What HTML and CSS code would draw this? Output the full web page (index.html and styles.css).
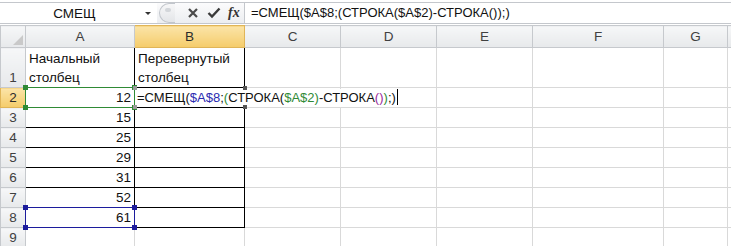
FILE: index.html
```html
<!DOCTYPE html>
<html lang="ru">
<head>
  <meta charset="UTF-8">
  <title>СМЕЩ</title>
  <link rel="stylesheet" href="styles.css">
</head>
<body>
  <div class="fbar">
    <div class="namebox">
      <span class="name">СМЕЩ</span>
      <span class="drop"></span>
    </div>
    <div class="fbtns">
      <span class="grip"><span class="dot"></span></span>
      <svg class="ico x" width="12" height="12" viewBox="0 0 12 12">
        <path d="M2 2 L10 10 M10 2 L2 10" stroke="#4a4a4a" stroke-width="2.2" fill="none"/>
      </svg>
      <svg class="ico ok" width="14" height="12" viewBox="0 0 14 12">
        <path d="M1.5 6 L5 9.5 L12.5 1.5" stroke="#3a3a3a" stroke-width="2.4" fill="none"/>
      </svg>
      <span class="fx">fx</span>
    </div>
    <div class="ftext">=СМЕЩ($A$8;(СТРОКА($A$2)-СТРОКА());)</div>
  </div>

  <table class="sheet">
    <colgroup>
      <col style="width:25px">
      <col style="width:109px">
      <col style="width:110px">
      <col style="width:96px">
      <col style="width:96px">
      <col style="width:96px">
      <col style="width:131px">
      <col style="width:64px">
      <col style="width:4px">
    </colgroup>
    <thead>
      <tr class="hdr">
        <th class="corner"><svg width="10" height="10" viewBox="0 0 10 10"><path d="M10 0 L10 10 L0 10 Z" fill="#c9c9c9"/></svg></th>
        <th>A</th>
        <th class="sel">B</th>
        <th>C</th>
        <th>D</th>
        <th>E</th>
        <th>F</th>
        <th>G</th>
        <th></th>
      </tr>
    </thead>
    <tbody>
      <tr class="r1">
        <th>1</th>
        <td class="bx wrap">Начальный столбец</td>
        <td class="bx wrap">Перевернутый столбец</td>
        <td></td><td></td><td></td><td></td><td></td><td></td>
      </tr>
      <tr>
        <th class="sel">2</th>
        <td class="bx num">12<span class="ref green"><i class="h tl"></i><i class="h tr"></i><i class="h bl"></i><i class="h br"></i></span></td>
        <td class="bx edit"><span class="editor"><span>=СМЕЩ(</span><span class="c-blue">$A$8</span><span>;</span><span class="c-green">(</span><span>СТРОКА(</span><span class="c-green">$A$2</span><span class="c-green">)</span><span>-СТРОКА</span><span class="c-purple">()</span><span class="c-green">)</span><span>;)</span><span class="caret"></span></span><i class="h2 tl"></i><i class="h2 tr"></i><i class="h2 bl"></i><i class="h2 br"></i></td>
        <td></td><td></td><td></td><td></td><td></td><td></td>
      </tr>
      <tr><th>3</th><td class="bx num">15</td><td class="bx"></td><td></td><td></td><td></td><td></td><td></td><td></td></tr>
      <tr><th>4</th><td class="bx num">25</td><td class="bx"></td><td></td><td></td><td></td><td></td><td></td><td></td></tr>
      <tr><th>5</th><td class="bx num">29</td><td class="bx"></td><td></td><td></td><td></td><td></td><td></td><td></td></tr>
      <tr><th>6</th><td class="bx num">31</td><td class="bx"></td><td></td><td></td><td></td><td></td><td></td><td></td></tr>
      <tr><th>7</th><td class="bx num">52</td><td class="bx"></td><td></td><td></td><td></td><td></td><td></td><td></td></tr>
      <tr>
        <th>8</th>
        <td class="bx num">61<span class="ref blue"><i class="h tl"></i><i class="h tr"></i><i class="h bl"></i><i class="h br"></i></span></td>
        <td class="bx"></td>
        <td></td><td></td><td></td><td></td><td></td><td></td>
      </tr>
      <tr><th>9</th><td></td><td></td><td></td><td></td><td></td><td></td><td></td><td></td></tr>
    </tbody>
  </table>
</body>
</html>
```

FILE: styles.css
```css
body {
  margin: 0;
  width: 731px;
  height: 246px;
  overflow: hidden;
  background: #fff;
  font-family: "Liberation Sans", Arial, sans-serif;
  font-size: 13.5px;
  color: #111;
}

/* formula bar */
.fbar {
  display: flex;
  height: 20px;
  margin-top: 2px;
  border-top: 1px solid #c4c7cc;
  border-bottom: 1px solid #c4c7cc;
  background: #fff;
}
.namebox {
  width: 157px;
  display: flex;
  align-items: center;
}
.namebox .name {
  flex: 1;
  text-align: center;
  padding-left: 4px;
}
.namebox .drop {
  width: 0;
  height: 0;
  border-left: 3px solid transparent;
  border-right: 3px solid transparent;
  border-top: 3px solid #333;
  margin-right: 6px;
}
.fbtns {
  width: 87px;
  display: flex;
  align-items: center;
  background: linear-gradient(#fbfbfc, #eceef1);
}
.grip {
  width: 15px;
  height: 18px;
  margin-left: 2px;
  border: 1px solid #c2c6cc;
  border-right: none;
  border-radius: 10px 0 0 10px;
  background: linear-gradient(#f7f7f8, #e3e5e8);
  display: flex;
  align-items: center;
  justify-content: center;
}
.grip .dot {
  width: 6px;
  height: 4px;
  border-radius: 2px;
  background: #d3d6da;
  margin-bottom: 6px;
}
.ico {
  display: block;
}
.ico.x { margin-left: 12px; }
.ico.ok { margin-left: 8px; }
.fx {
  margin-left: 7px;
  font-family: "Liberation Serif", serif;
  font-style: italic;
  font-weight: bold;
  font-size: 14px;
  color: #333;
}
.ftext {
  flex: 1;
  border-left: 1px solid #c4c7cc;
  padding-left: 6px;
  line-height: 20px;
  font-size: 13px;
  white-space: nowrap;
}

/* sheet grid */
.sheet {
  width: 731px;
  border-collapse: collapse;
  table-layout: fixed;
  margin-top: 1px;
}
.sheet th,
.sheet td {
  border: 1px solid #d9d9d9;
  padding: 0 3px;
  height: 19px;
  white-space: nowrap;
  overflow: visible;
  vertical-align: bottom;
  line-height: 19px;
}
.sheet th {
  font-weight: normal;
  color: #404040;
  background: linear-gradient(#f6f7f8, #e7e9eb);
  border-color: #c6c9cd;
  text-align: center;
  padding: 0;
}
.hdr th {
  height: 21px;
  vertical-align: middle;
}
.hdr th.corner {
  text-align: right;
  vertical-align: bottom;
}
.corner svg {
  display: block;
  margin: 0 2px 2px auto;
}
.sheet th.sel {
  background: linear-gradient(#fbe4a8, #f5cc6a);
  color: #2b2b2b;
  border-color: #e0b558;
}
.r1 td,
.r1 th {
  height: 39px;
}
.sheet td.bx {
  border: 1px solid #000;
}
.wrap {
  white-space: normal !important;
  line-height: 19px;
}
.num {
  text-align: right;
  position: relative;
}

/* reference highlights */
.ref {
  position: absolute;
  left: -1px;
  top: -1px;
  right: -1px;
  bottom: -1px;
  border: 1px solid;
}
.ref.green { border-color: #2f8a35; }
.ref.blue { border-color: #1c1c9c; }
.h, .h2 {
  position: absolute;
  width: 5px;
  height: 5px;
}
.green .h { background: #2f8a35; }
.blue .h { background: #1c1c9c; }
.h.tl { left: -3px; top: -3px; }
.h.tr { right: -3px; top: -3px; }
.h.bl { left: -3px; bottom: -3px; }
.h.br { right: -3px; bottom: -3px; }

/* cell being edited */
.edit {
  position: relative;
  padding-left: 2px !important;
}
.editor {
  position: relative;
  z-index: 2;
  display: inline-block;
  background: #fff;
  padding-right: 2px;
  line-height: 18px;
  font-size: 13px;
}
.h2 {
  width: 4px;
  height: 4px;
  background: #555;
  z-index: 3;
}
.h2.tl { left: -2px; top: -2px; background: #9a9a9a; }
.h2.bl { left: -2px; bottom: -2px; background: #9a9a9a; }
.h2.tr { right: -3px; top: -2px; }
.h2.br { right: -3px; bottom: -2px; }
.c-blue { color: #2a2ab0; }
.c-green { color: #2f8a35; }
.c-purple { color: #9a2c9a; }
.caret {
  display: inline-block;
  width: 1px;
  height: 16px;
  background: #000;
  vertical-align: -3px;
  margin-left: 1px;
}
```
